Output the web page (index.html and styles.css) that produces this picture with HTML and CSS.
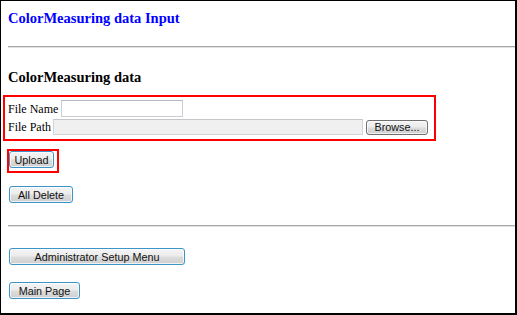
FILE: index.html
```html
<!DOCTYPE html>
<html lang="en">
<head>
  <meta charset="UTF-8" />
  <title>ColorMeasuring data Input</title>
  <link rel="stylesheet" href="styles.css">
</head>
<body>
  <div class="frame">
    <h1 class="title">ColorMeasuring data Input</h1>
    <hr class="rule rule-top">
    <h2 class="section-title">ColorMeasuring data</h2>

    <form class="upload-form" onsubmit="return false;">
      <div class="highlight file-fields">
        <div class="field-row">
          <label for="fileName">File Name</label>
          <input type="text" id="fileName" class="name-input" />
        </div>
        <div class="field-row">
          <label for="filePath">File Path</label>
          <input type="text" id="filePath" class="path-input" readonly />
          <button type="button" class="btn btn-browse">Browse...</button>
        </div>
      </div>

      <div class="highlight upload-box">
        <button type="submit" class="btn btn-blue btn-upload">Upload</button>
      </div>

      <div class="delete-row">
        <button type="button" class="btn btn-blue btn-delete">All Delete</button>
      </div>
    </form>

    <hr class="rule rule-bottom">

    <div class="nav-row">
      <button type="button" class="btn btn-blue btn-admin">Administrator Setup Menu</button>
    </div>
    <div class="nav-row nav-main">
      <button type="button" class="btn btn-blue btn-main">Main Page</button>
    </div>
  </div>
</body>
</html>
```

FILE: styles.css
```css
body {
  margin: 0;
  background: white;
}

.frame {
  box-sizing: border-box;
  width: 517px;
  height: 315px;
  border: solid #000;
  border-width: 1px 2px 2px 1px;
  padding: 9px 0 0 7px;
  font-family: 'Liberation Serif', 'Times New Roman', serif;
  color: #000;
  overflow: hidden;
}

.title {
  margin: 0;
  font-size: 14.5px;
  line-height: 16px;
  font-weight: bold;
  color: #0000ff;
}

.section-title {
  margin: 21px 0 0;
  font-size: 14.5px;
  line-height: 16px;
  font-weight: bold;
}

.rule {
  height: 0;
  margin: 0;
  border: none;
  border-top: 1px solid #a8a8a8;
  border-bottom: 1px solid #e2e2e2;
}

.rule-top {
  margin-top: 20px;
}

.rule-bottom {
  margin-top: 22px;
}

.highlight {
  display: block;
  width: fit-content;
  border: 2px solid #ff0000;
}

.file-fields {
  margin: 10px 0 0 -5px;
  padding: 3px 6px 4px 3px;
  font-size: 12px;
}

.field-row {
  display: flex;
  align-items: center;
  gap: 2px;
}

.field-row + .field-row {
  margin-top: 2px;
}

.field-row label {
  line-height: 14px;
}

.name-input,
.path-input {
  box-sizing: border-box;
  margin: 0;
  padding: 0 2px;
  font: 12px 'Liberation Sans', Arial, sans-serif;
  outline: none;
}

.name-input {
  width: 122px;
  height: 17px;
  margin-left: 1px;
  border: 1px solid #c9ccd1;
  border-top-color: #b5b8bd;
  background: #fff;
}

.path-input {
  width: 310px;
  height: 16px;
  border: 1px solid #d0d3d8;
  border-top-color: #c4c6ca;
  background: #f0f0f0;
}

.btn {
  box-sizing: border-box;
  margin: 0;
  padding: 0;
  height: 17px;
  font: 10.8px 'Liberation Sans', Arial, sans-serif;
  color: #111;
  border: 1px solid #707070;
  border-radius: 3px;
  background: linear-gradient(#f4f4f4 0%, #ececec 45%, #dcdcdc 55%, #cfcfcf 100%);
  box-shadow: inset 0 0 0 1px rgba(255,255,255,0.7);
  cursor: pointer;
}

.btn-blue {
  border-color: #3c95c9;
}

.btn-browse {
  width: 62px;
  height: 15px;
  margin-left: 1px;
}

.upload-box {
  margin: 8px 0 0 -1px;
  padding: 0 3px 3px 0;
  line-height: 0;
}

.btn-upload {
  width: 45px;
}

.delete-row {
  margin-top: 13px;
  padding-left: 1px;
  line-height: 0;
}

.btn-delete {
  width: 64px;
}

.nav-row {
  margin-top: 21px;
  padding-left: 1px;
  line-height: 0;
}

.nav-main {
  margin-top: 17px;
}

.btn-admin {
  width: 176px;
}

.btn-main {
  width: 71px;
}
```
